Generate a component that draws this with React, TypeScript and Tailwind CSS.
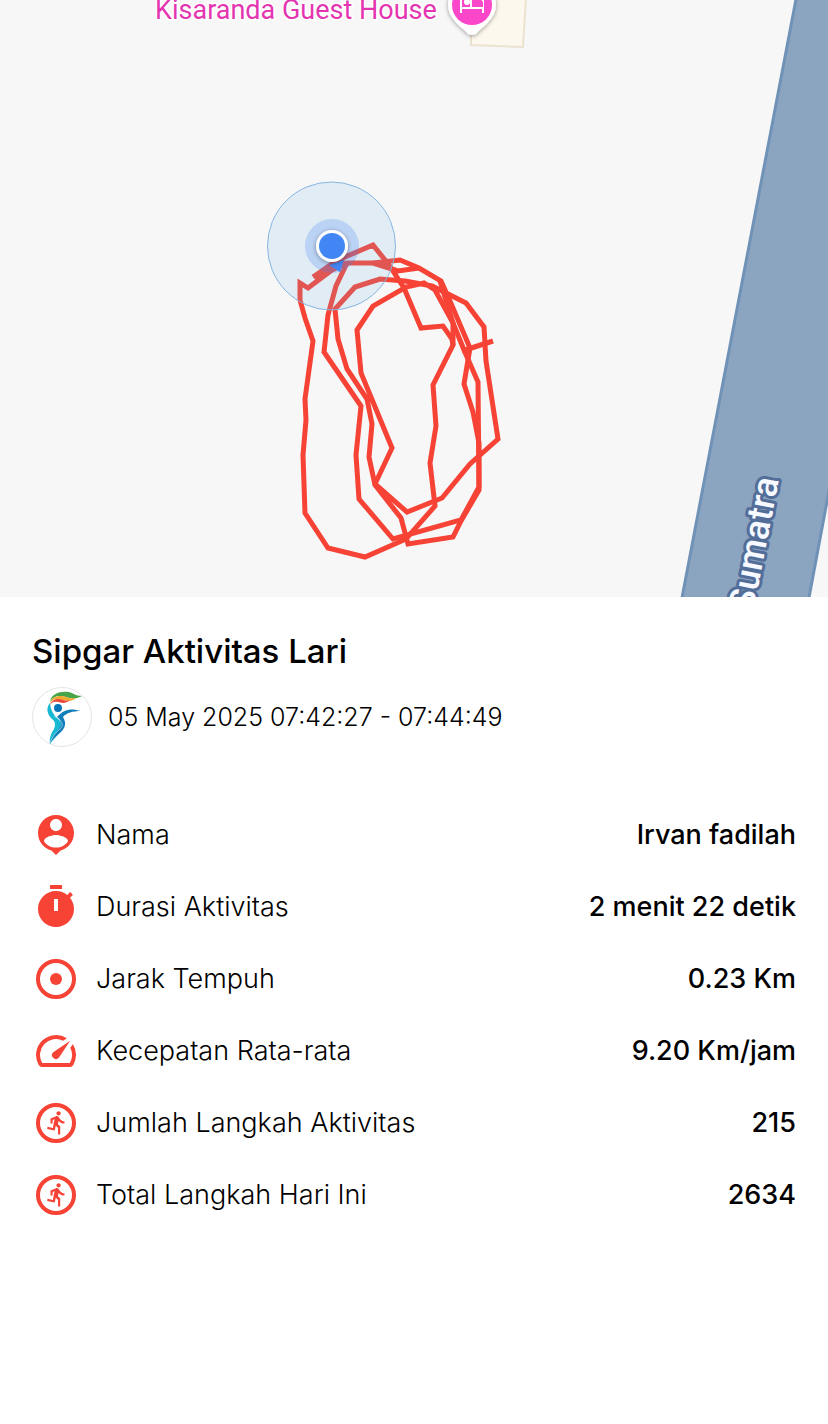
import type { ReactNode } from 'react';

type Stat = {
  label: string;
  value: string;
  icon: ReactNode;
};

const routes = [
  '313,277 332,264 345,257 373,245 389,265 404,288 421,328 443,326 452,339 453,345 433,385 436,426 430,463 435,506 406,539 365,557 328,548 305,513 303,455 306,420 305,399 313,341 305,318 300,300 300,283 308,288 332,270 347,263 373,263 398,271 419,268',
  '373,263 400,260 419,268 441,281 450,301 470,348 464,384 473,412 479,443 479,490 461,521 453,537 408,544 401,518 375,485 369,457 372,424 367,399 347,369 338,339 335,309 355,287 380,279 405,281 432,286 466,303 484,327 486,361 498,439 470,464 442,498 407,512 375,484 392,448 361,373 357,330 373,306 406,287 424,283 435,290 453,323 453,345',
  '347,263 336,286 328,315 324,352 361,406 356,455 359,499 393,539 461,520 479,487 478,382 464,350 453,323 440,281',
  '315,279 330,269 345,262',
  '462,351 493,341',
];

const runner = (
  <>
    <circle cx="12" cy="12" r="9" fill="none" stroke="currentColor" strokeWidth="2" />
    <path
      transform="translate(6 5.3) scale(.54)"
      d="M13.49 5.48c1.1 0 2-.9 2-2s-.9-2-2-2-2 .9-2 2 .9 2 2 2zm-3.6 13.9 1-4.4 2.1 2v6h2v-7.5l-2.1-2 .6-3c1.3 1.5 3.3 2.5 5.5 2.5v-2c-1.9 0-3.5-1-4.3-2.4l-1-1.6c-.4-.6-1-1-1.7-1-.3 0-.5.1-.8.1l-5.2 2.2v4.7h2v-3.4l1.8-.7-1.6 8.1-4.9-1-.4 2 7 1.4z"
    />
  </>
);

const stats: Stat[] = [
  {
    label: 'Nama',
    value: 'Irvan fadilah',
    icon: (
      <path d="M12 2c-4.97 0-9 4.03-9 9 0 4.17 2.84 7.67 6.69 8.69L12 22l2.31-2.31C18.16 18.67 21 15.17 21 11c0-4.97-4.03-9-9-9zm0 2c1.66 0 3 1.34 3 3s-1.34 3-3 3-3-1.34-3-3 1.34-3 3-3zm0 14.3c-2.5 0-4.71-1.28-6-3.22.03-1.99 4-3.08 6-3.08 1.99 0 5.97 1.09 6 3.08-1.29 1.94-3.5 3.22-6 3.22z" />
    ),
  },
  {
    label: 'Durasi Aktivitas',
    value: '2 menit 22 detik',
    icon: (
      <path d="M9 1h6v2H9zM19.03 7.39l1.42-1.42c-.43-.51-.9-.99-1.41-1.41l-1.42 1.42C16.07 4.74 14.12 4 12 4c-4.97 0-9 4.03-9 9s4.02 9 9 9 9-4.03 9-9c0-2.12-.74-4.07-1.97-5.61zM13 14h-2V8h2v6z" />
    ),
  },
  {
    label: 'Jarak Tempuh',
    value: '0.23 Km',
    icon: (
      <>
        <circle cx="12" cy="12" r="9" fill="none" stroke="currentColor" strokeWidth="2" />
        <circle cx="12" cy="12" r="3" />
      </>
    ),
  },
  {
    label: 'Kecepatan Rata-rata',
    value: '9.20 Km/jam',
    icon: (
      <path d="m20.38 8.57-1.23 1.85a8 8 0 0 1-.22 7.58H5.07A8 8 0 0 1 15.58 6.85l1.85-1.23A10 10 0 0 0 3.35 19a2 2 0 0 0 1.72 1h13.85a2 2 0 0 0 1.74-1 10 10 0 0 0-.27-10.44zM10.59 15.41a2 2 0 0 0 2.83 0l5.66-8.49-8.49 5.66a2 2 0 0 0 0 2.83z" />
    ),
  },
  { label: 'Jumlah Langkah Aktivitas', value: '215', icon: runner },
  { label: 'Total Langkah Hari Ini', value: '2634', icon: runner },
];

const RouteMap = () => (
  <svg viewBox="0 0 828 597" className="block w-full bg-[#f7f7f7]" role="img" aria-label="Sumatra">
    <defs>
      <filter id="pin-shadow" x="-30%" y="-30%" width="160%" height="160%">
        <feDropShadow dx="0" dy="1" stdDeviation="2" floodOpacity="0.4" />
      </filter>
    </defs>

    {/* Road */}
    <path d="M797 -6 681 603H808L831 480V-6Z" fill="#8ba4c0" stroke="#7092b6" strokeWidth="3" />
    <text
      transform="translate(753 613) rotate(-79)"
      fontSize="36"
      fill="#f6f9ff"
      stroke="#536d99"
      strokeWidth="6"
      strokeLinejoin="round"
      paintOrder="stroke"
      className="font-['Roboto',sans-serif] font-medium"
    >
      Sumatra
    </text>

    {/* Guest house */}
    <path d="M471 -2V45L523 47 526 -2Z" fill="#fdf8ed" stroke="#ebe2d0" strokeWidth="2" />
    <text
      x="155"
      y="19"
      fontSize="27"
      fill="#e435b1"
      stroke="#ffffff"
      strokeWidth="3"
      paintOrder="stroke"
      className="font-['Roboto',sans-serif]"
    >
      Kisaranda Guest House
    </text>
    <path
      d="M472 35c-3 0-5-2-8-5-9-8-16-15-16-25a24 24 0 0 1 48 0c0 10-7 17-16 25-3 3-5 5-8 5Z"
      fill="#ffffff"
      filter="url(#pin-shadow)"
    />
    <circle cx="472" cy="5" r="20" fill="#fb48cb" />
    <path d="M461 -5V13M461 8H483M483 13V2q0-4-4-4H471V8" fill="none" stroke="#ffffff" strokeWidth="2" />
    <path d="M472 -2H479L483 2V7H472Z" fill="#fb48cb" />
    <circle cx="467" cy="2" r="3" fill="#ffffff" />

    {/* Track */}
    {routes.map((points) => (
      <polyline key={points} points={points} fill="none" stroke="#f64336" strokeWidth="5" />
    ))}

    {/* Current position */}
    <circle cx="331.5" cy="246" r="64" fill="#76b5e6" fillOpacity="0.16" stroke="#86b6e2" strokeWidth="1" />
    <circle cx="332" cy="246" r="27" fill="#4285f4" fillOpacity="0.25" />
    <path d="M329 265 344 260 340 272Z" fill="#4285f4" />
    <circle cx="332" cy="246" r="16" fill="#ffffff" filter="url(#pin-shadow)" />
    <circle cx="332" cy="246" r="13" fill="#4285f4" />
  </svg>
);

const Logo = () => (
  <svg viewBox="0 0 60 60" className="size-15 shrink-0" aria-hidden="true">
    <circle cx="30" cy="30" r="29.5" fill="#ffffff" stroke="#e4e4e4" strokeWidth="1" />
    <path d="M18 15C19 5 33 3 40 6 43 8 46 9 50 9 45 12 39 12 34 10 27 8 21 9 18 15Z" fill="#45a548" />
    <path d="M18 16C20 9 28 8 34 10 38 12 41 11 44 11 40 15 34 14 30 13 24 11 21 12 18 16Z" fill="#f2a92f" />
    <path d="M18 18C20 12 26 11 31 13 34 14 36 14 38 13 34 17 29 16 26 15 22 14 20 15 18 18Z" fill="#e84a3c" />
    <path d="M18 16C14 20 15 27 19 31 23 34 24 37 22 42 19 47 17 51 18 57 22 51 30 45 32 38 28 32 19 29 18 16Z" fill="#17b9d2" />
    <path d="M25 30C32 22 39 21 49 24 41 24 34 26 31 30 35 37 33 41 28 46 24 49 20 52 18 57 18 50 27 44 29 38 29 34 28 32 25 30Z" fill="#137fba" />
    <path d="M22 29C29 33 33 37 28 42 23 46 20 50 18 56" fill="none" stroke="#ffffff" strokeWidth="0.5" />
    <circle cx="26" cy="21" r="4" fill="#0876b8" />
  </svg>
);

export default function App() {
  return (
    <main className="min-h-screen w-full bg-white font-['Inter',sans-serif] text-black">
      <RouteMap />

      <section className="px-8 pt-8">
        <h1 className="text-[33px] leading-11 font-medium">Sipgar Aktivitas Lari</h1>
        <div className="mt-3.5 flex items-center gap-4">
          <Logo />
          <p className="text-[25px] leading-9 font-light">05 May 2025 07:42:27 - 07:44:49</p>
        </div>

        <dl className="mt-16 flex flex-col gap-6">
          {stats.map(({ label, value, icon }) => (
            <div key={label} className="flex items-center justify-between">
              <dt className="flex items-center gap-4 text-[27px] leading-9 font-light">
                <svg
                  viewBox="0 0 24 24"
                  fill="currentColor"
                  className="size-12 shrink-0 text-[#f64336]"
                  aria-hidden="true"
                >
                  {icon}
                </svg>
                {label}
              </dt>
              <dd className="text-right text-[27px] leading-9 font-medium">{value}</dd>
            </div>
          ))}
        </dl>
      </section>
    </main>
  );
}
